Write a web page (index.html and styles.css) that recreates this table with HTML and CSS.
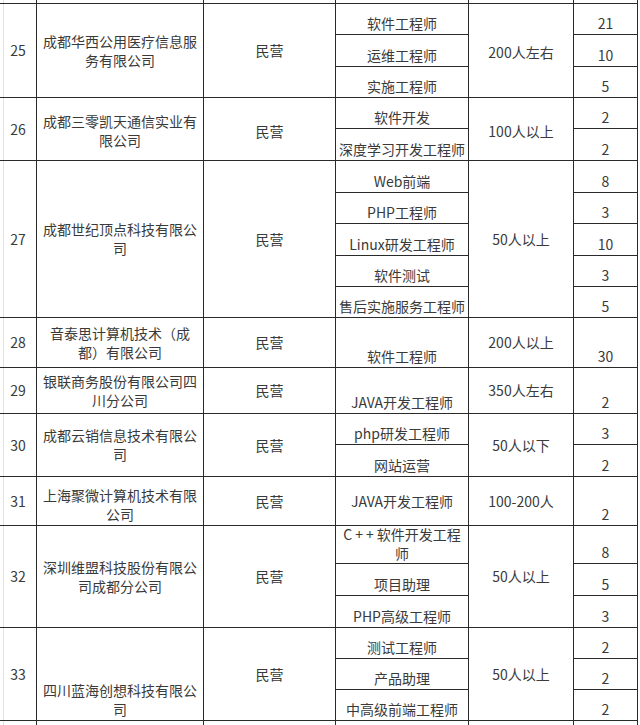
FILE: index.html
```html
<!DOCTYPE html>
<html lang="zh-CN">
<head>
<meta charset="utf-8">
<title>招聘企业列表</title>
<link rel="stylesheet" href="styles.css">
</head>
<body>
<div class="sheet">
  <!-- continuation of previous row -->
  <div class="cell stub c1"></div>
  <div class="cell stub c2"></div>
  <div class="cell stub c3"></div>
  <div class="cell stub c4"></div>
  <div class="cell stub c5"></div>
  <div class="cell stub c6"></div>

  <!-- 25 -->
  <div class="cell num c1 s3">25</div>
  <div class="cell c2 s3">成都华西公用医疗信息服<br>务有限公司</div>
  <div class="cell c3 s3">民营</div>
  <div class="cell b c4">软件工程师</div>
  <div class="cell c5 s3 low">200人左右</div>
  <div class="cell b c6">21</div>
  <div class="cell b c4">运维工程师</div>
  <div class="cell b c6">10</div>
  <div class="cell b c4">实施工程师</div>
  <div class="cell b c6">5</div>

  <!-- 26 -->
  <div class="cell num c1 s2">26</div>
  <div class="cell c2 s2 low">成都三零凯天通信实业有<br>限公司</div>
  <div class="cell c3 s2 low">民营</div>
  <div class="cell b c4">软件开发</div>
  <div class="cell c5 s2 low">100人以上</div>
  <div class="cell b c6">2</div>
  <div class="cell b c4">深度学习开发工程师</div>
  <div class="cell b c6">2</div>

  <!-- 27 -->
  <div class="cell num c1 s5">27</div>
  <div class="cell c2 s5">成都世纪顶点科技有限公<br>司</div>
  <div class="cell c3 s5">民营</div>
  <div class="cell b c4">Web前端</div>
  <div class="cell c5 s5">50人以上</div>
  <div class="cell b c6">8</div>
  <div class="cell b c4">PHP工程师</div>
  <div class="cell b c6">3</div>
  <div class="cell b c4">Linux研发工程师</div>
  <div class="cell b c6">10</div>
  <div class="cell b c4">软件测试</div>
  <div class="cell b c6">3</div>
  <div class="cell b c4">售后实施服务工程师</div>
  <div class="cell b c6">5</div>

  <!-- 28 -->
  <div class="cell num c1">28</div>
  <div class="cell c2">音泰思计算机技术（成<br>都）有限公司</div>
  <div class="cell c3">民营</div>
  <div class="cell b c4">软件工程师</div>
  <div class="cell c5">200人以上</div>
  <div class="cell b c6">30</div>

  <!-- 29 -->
  <div class="cell num c1">29</div>
  <div class="cell c2">银联商务股份有限公司四<br>川分公司</div>
  <div class="cell c3">民营</div>
  <div class="cell b c4">JAVA开发工程师</div>
  <div class="cell c5">350人左右</div>
  <div class="cell b c6">2</div>

  <!-- 30 -->
  <div class="cell num c1 s2">30</div>
  <div class="cell c2 s2">成都云销信息技术有限公<br>司</div>
  <div class="cell c3 s2">民营</div>
  <div class="cell b c4">php研发工程师</div>
  <div class="cell c5 s2">50人以下</div>
  <div class="cell b c6">3</div>
  <div class="cell b c4">网站运营</div>
  <div class="cell b c6">2</div>

  <!-- 31 -->
  <div class="cell num c1">31</div>
  <div class="cell b c2">上海聚微计算机技术有限<br>公司</div>
  <div class="cell c3">民营</div>
  <div class="cell c4">JAVA开发工程师</div>
  <div class="cell c5">100-200人</div>
  <div class="cell b c6">2</div>

  <!-- 32 -->
  <div class="cell num c1 s3">32</div>
  <div class="cell c2 s3">深圳维盟科技股份有限公<br>司成都分公司</div>
  <div class="cell c3 s3">民营</div>
  <div class="cell b two c4"><span><span class="cpp">C++</span>软件开发工程<br>师</span></div>
  <div class="cell c5 s3">50人以上</div>
  <div class="cell b c6">8</div>
  <div class="cell b c4">项目助理</div>
  <div class="cell b c6">5</div>
  <div class="cell b c4">PHP高级工程师</div>
  <div class="cell b c6">3</div>

  <!-- 33 -->
  <div class="cell num c1 s3">33</div>
  <div class="cell b c2 s3">四川蓝海创想科技有限公<br>司</div>
  <div class="cell c3 s3">民营</div>
  <div class="cell b c4">测试工程师</div>
  <div class="cell c5 s3">50人以上</div>
  <div class="cell b c6">2</div>
  <div class="cell b c4">产品助理</div>
  <div class="cell b c6">2</div>
  <div class="cell b c4">中高级前端工程师</div>
  <div class="cell b c6">2</div>

  <!-- start of next row -->
  <div class="cell stub c1"></div>
  <div class="cell stub c2"></div>
  <div class="cell stub c3"></div>
  <div class="cell stub c4"></div>
  <div class="cell stub c5"></div>
  <div class="cell stub c6"></div>
</div>
</body>
</html>
```

FILE: styles.css
```css
html, body {
  margin: 0;
  padding: 0;
  background: #ffffff;
}

body {
  width: 640px;
  height: 725px;
  overflow: hidden;
  font-family: "Noto Sans CJK SC", "Noto Sans", "Liberation Sans", sans-serif;
  font-size: 14px;
  color: #3a3a3a;
}

.sheet {
  display: grid;
  width: 637px;
  padding-right: 1px;
  background: #2a2a2a;
  column-gap: 1px;
  row-gap: 1px;
  grid-template-columns: 36px 166px 131px 132px 104px 63px;
  grid-template-rows:
    3px
    30px 31px 30px
    30px 31px
    31px 30px 31px 30px 30px
    49px
    45px
    30px 31px
    48px
    37px 31px 31px
    30px 30px 30px
    10px;
}

.cell {
  background: #ffffff;
  display: flex;
  justify-content: center;
  align-items: center;
  text-align: center;
  line-height: 19px;
  white-space: nowrap;
  min-width: 0;
  overflow: hidden;
}

.c1 { grid-column: 1; }
.c2 { grid-column: 2; }
.c3 { grid-column: 3; }
.c4 { grid-column: 4; }
.c5 { grid-column: 5; }
.c6 { grid-column: 6; }

.s2 { grid-row-end: span 2; }
.s3 { grid-row-end: span 3; }
.s5 { grid-row-end: span 5; }

.b {
  align-items: flex-end;
  padding-bottom: 1px;
}

.two {
  padding-bottom: 0;
  overflow: visible;
}

.low {
  padding-top: 4px;
}

.num {
  background: linear-gradient(to right, #ffffff 3px, #e2e2e2 3px, #e2e2e2 4px, #ffffff 4px);
}

.stub.c1 {
  background: linear-gradient(to right, #ffffff 3px, #e2e2e2 3px, #e2e2e2 4px, #ffffff 4px);
}

.cpp {
  letter-spacing: 3px;
}
```
